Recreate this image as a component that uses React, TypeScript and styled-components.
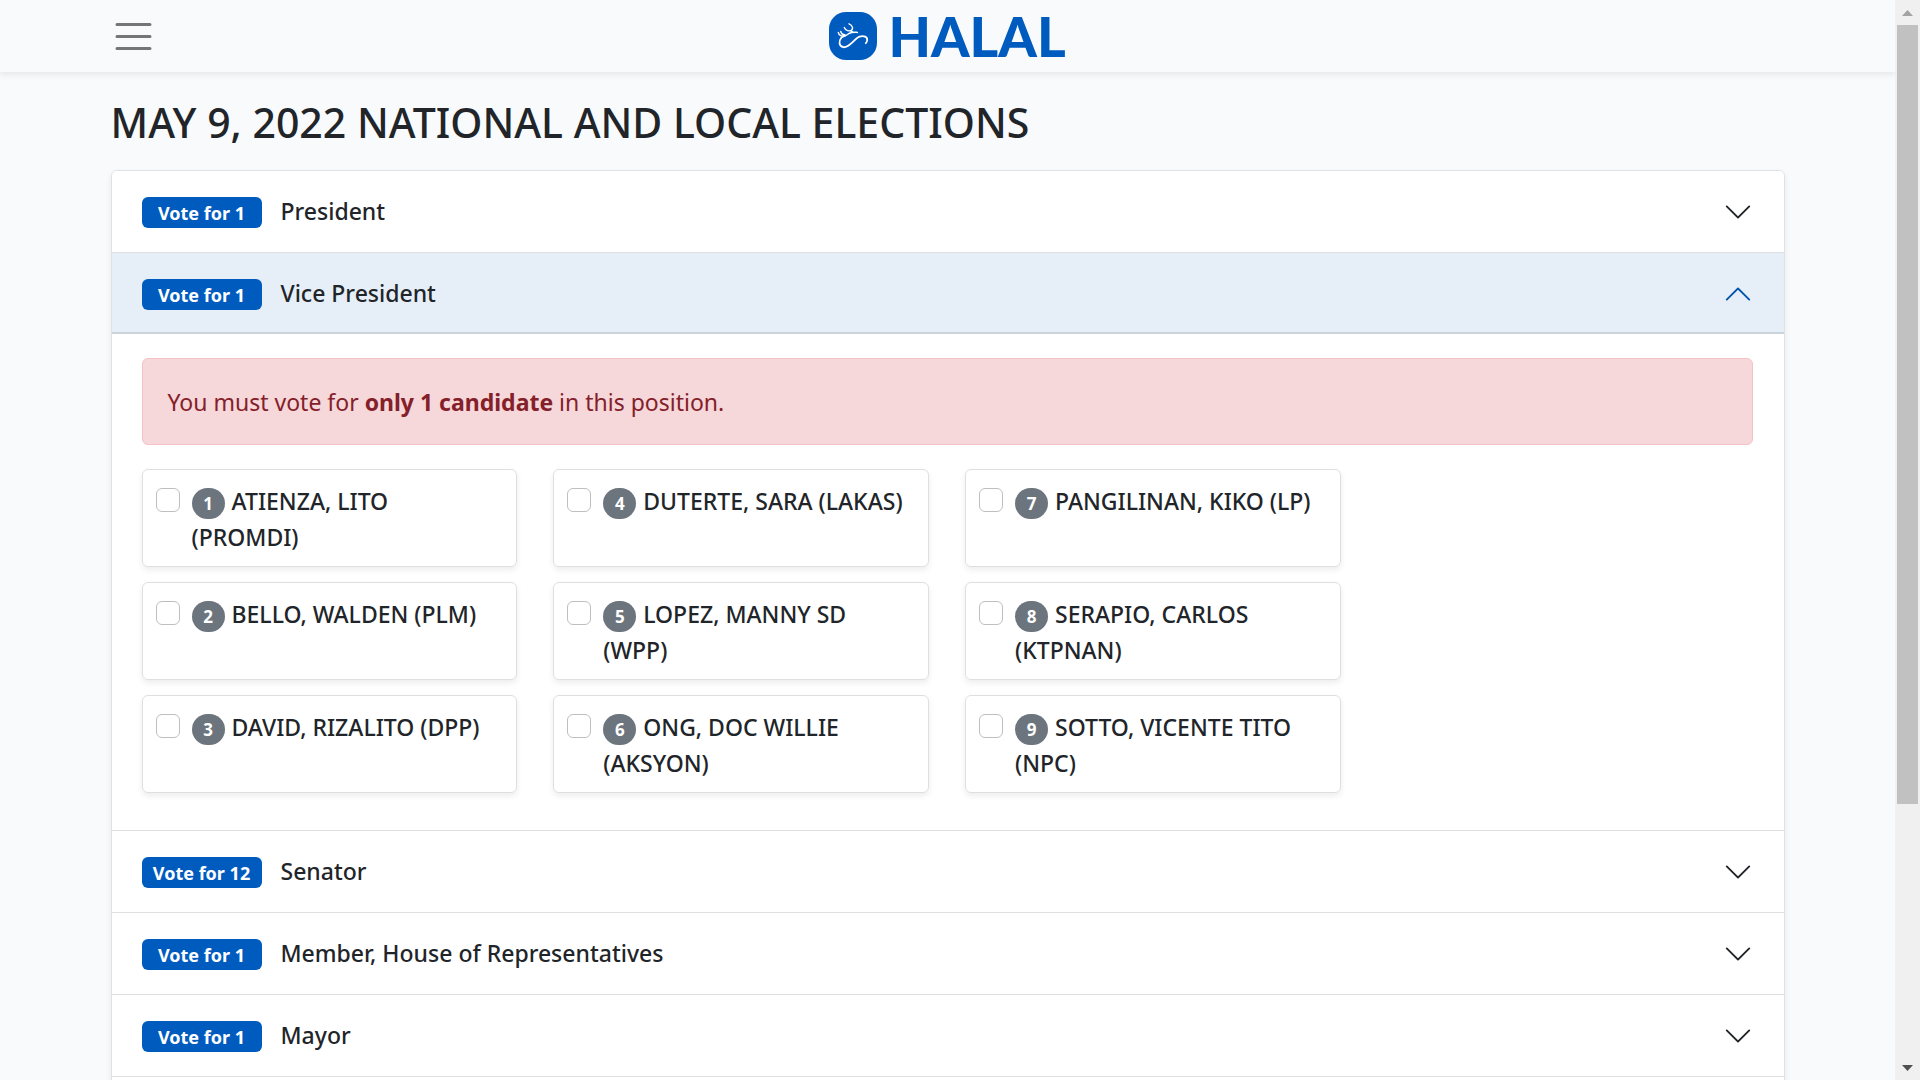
import React, { useState } from "react";
import styled, { createGlobalStyle } from "styled-components";

const blue = "#005bbf";
const ink = "#212529";

const GlobalStyle = createGlobalStyle`
  *, *::before, *::after { box-sizing: border-box; }
  body {
    margin: 0;
    background: #f8fafc;
    color: ${ink};
    font-family: "Segoe UI", "Noto Sans", "Open Sans", sans-serif;
    font-size: 23px;
    line-height: 36px;
  }
`;

const Shell = styled.div`
  display: flex;
  height: 100vh;
  overflow: hidden;
`;

const Page = styled.div`
  flex: 1;
  min-width: 0;
  overflow: hidden;
`;

const Container = styled.div`
  width: 100%;
  max-width: 1710px;
  margin: 0 auto;
  padding: 0 18px;
`;

const Navbar = styled.header`
  box-shadow: 0 3px 6px rgba(0, 0, 0, 0.075);
`;

const NavRow = styled(Container)`
  display: grid;
  grid-template-columns: 1fr auto 1fr;
  align-items: center;
  height: 72px;
`;

const MenuButton = styled.button`
  display: flex;
  justify-self: start;
  padding: 0;
  border: 0;
  background: none;
  cursor: pointer;
`;

const Brand = styled.a`
  display: flex;
  align-items: center;
  gap: 11px;
  color: ${blue};
  text-decoration: none;
`;

const Wordmark = styled.span`
  font-family: Lato, sans-serif;
  font-size: 55px;
  font-weight: 900;
  line-height: 60px;
`;

const Title = styled.h1`
  margin: 0;
  padding: 25px 0 23px;
  font-size: 41px;
  font-weight: 500;
  line-height: 50px;
`;

const Accordion = styled.main`
  min-height: 100vh;
  border: 1px solid #dfe1e3;
  border-radius: 6px;
  background: #fff;
  box-shadow: 0 3px 6px rgba(0, 0, 0, 0.075);
`;

const Item = styled.section`
  border-bottom: 1px solid #dfdfdf;
`;

const ItemHeading = styled.h2`
  margin: 0;
  font: inherit;
`;

const ItemButton = styled.button<{ $open: boolean }>`
  display: flex;
  align-items: center;
  gap: 19px;
  width: 100%;
  height: 81px;
  padding: 0 31px 0 30px;
  border: 0;
  border-radius: ${(p) => (p.$open ? "0" : "5px")};
  background: ${(p) => (p.$open ? "#e6eff8" : "#fff")};
  box-shadow: ${(p) => (p.$open ? "inset 0 -2px 0 #cbd4dd" : "none")};
  color: ${ink};
  font: inherit;
  font-weight: 500;
  text-align: left;
  cursor: pointer;
`;

const VoteBadge = styled.span`
  width: 120px;
  margin-top: 2px;
  padding-top: 1px;
  border-radius: 6px;
  background: ${blue};
  color: #fff;
  font-size: 18px;
  font-weight: 700;
  line-height: 30px;
  text-align: center;
`;

const ItemTitle = styled.span`
  flex: 1;
  padding-bottom: 2px;
`;

const ItemBody = styled.div`
  padding: 24px 31px 37px 30px;
`;

const Alert = styled.p`
  margin: 0 0 24px;
  padding: 25px 25px 24px;
  border: 1px solid #f5c2c7;
  border-radius: 6px;
  background: #f6d7da;
  color: #842029;
`;

const Candidates = styled.div`
  display: grid;
  grid-template-columns: repeat(4, minmax(0, 1fr));
  grid-template-rows: repeat(3, auto);
  grid-auto-flow: column;
  gap: 15px 36px;
`;

const Candidate = styled.label`
  display: flex;
  gap: 12px;
  min-height: 98px;
  padding: 13px 20px 10px 13px;
  border: 1px solid #dfdfdf;
  border-radius: 6px;
  box-shadow: 0 3px 6px rgba(0, 0, 0, 0.075);
  font-weight: 500;
  cursor: pointer;
`;

const Checkbox = styled.input`
  appearance: none;
  flex: none;
  width: 24px;
  height: 24px;
  margin: 5px 0 0;
  border: 1px solid #bfbfbf;
  border-radius: 6px;
  background: #fff;
  &:checked { background: ${blue}; border-color: ${blue}; }
`;

const NumberBadge = styled.span`
  display: inline-block;
  width: 33px;
  margin-right: 7px;
  border-radius: 16px;
  background: #6c757d;
  color: #fff;
  font-size: 17px;
  font-weight: 700;
  line-height: 31px;
  text-align: center;
  vertical-align: middle;
`;

const Rail = styled.div`
  display: flex;
  flex-direction: column;
  align-items: center;
  width: 25px;
  background: #f0f0f0;
`;

const RailButton = styled.button`
  display: flex;
  align-items: center;
  justify-content: center;
  width: 25px;
  height: 25px;
  padding: 0;
  border: 0;
  background: none;
`;

const RailTrack = styled.div`
  display: grid;
  flex: 1;
  grid-template-rows: 31fr 10fr;
  width: 21px;
`;

const RailThumb = styled.div`
  background: #c1c1c1;
`;

const Chevron = ({ open }: { open: boolean }) => (
  <svg width="30" height="30" viewBox="0 0 16 16" fill={open ? "#0052ac" : ink} aria-hidden="true">
    {open ? (
      <path fillRule="evenodd" d="M14.354 11.354a.5.5 0 0 1-.708 0L8 5.707l-5.646 5.647a.5.5 0 0 1-.708-.708l6-6a.5.5 0 0 1 .708 0l6 6a.5.5 0 0 1 0 .708z" />
    ) : (
      <path fillRule="evenodd" d="M1.646 4.646a.5.5 0 0 1 .708 0L8 10.293l5.646-5.647a.5.5 0 0 1 .708.708l-6 6a.5.5 0 0 1-.708 0l-6-6a.5.5 0 0 1 0-.708z" />
    )}
  </svg>
);

const LogoMark = () => (
  <svg width="48" height="48" viewBox="0 0 48 48" fill="none" stroke="#fff" strokeLinecap="round" strokeLinejoin="round" aria-hidden="true">
    <rect width="48" height="48" rx="17" fill={blue} stroke="none" />
    <path strokeWidth="1.8" d="M12.500 25.500C9.500 29 9.800 34.500 14.300 35.200C20.500 36 25 27 30.500 24.700C35 23 38.500 25 38.200 28C38.100 29.500 37.500 30.500 36.800 31.200" />
    <path strokeWidth="1.500" d="M12.500 25.500C15.500 24.500 17.500 23.500 20 21.500C22.500 20 25 20.300 28.500 20.400" />
    <path strokeWidth="1.400" d="M9.300 20.500C10 23.500 12.500 24.800 16.500 23.600M11.800 19.500C12.300 21.700 13.800 22.800 16 22.800M15.300 15.500C16.500 18 18.500 19.300 21.500 18.800C24.800 17.500 24 13.500 20 11.800M21.500 18.800L24 20.200" />
  </svg>
);

const positions = [
  { title: "President", votes: 1 },
  { title: "Vice President", votes: 1 },
  { title: "Senator", votes: 12 },
  { title: "Member, House of Representatives", votes: 1 },
  { title: "Mayor", votes: 1 },
];

const candidates = [
  "ATIENZA, LITO (PROMDI)",
  "BELLO, WALDEN (PLM)",
  "DAVID, RIZALITO (DPP)",
  "DUTERTE, SARA (LAKAS)",
  "LOPEZ, MANNY SD (WPP)",
  "ONG, DOC WILLIE (AKSYON)",
  "PANGILINAN, KIKO (LP)",
  "SERAPIO, CARLOS (KTPNAN)",
  "SOTTO, VICENTE TITO (NPC)",
];

export default function App() {
  const [current, setCurrent] = useState("Vice President");
  return (
    <>
      <GlobalStyle />
      <Shell>
        <Page>
          <Navbar>
            <NavRow as="nav">
              <MenuButton type="button" aria-label="Toggle navigation">
                <svg width="45" height="45" viewBox="0 0 30 30" stroke="#747577" strokeWidth="2" strokeLinecap="round" aria-hidden="true">
                  <path d="M4 7h22M4 15h22M4 23h22" />
                </svg>
              </MenuButton>
              <Brand href="#">
                <LogoMark />
                <Wordmark>HALAL</Wordmark>
              </Brand>
            </NavRow>
          </Navbar>
          <Container>
            <Title>MAY 9, 2022 NATIONAL AND LOCAL ELECTIONS</Title>
            <Accordion>
              {positions.map(({ title, votes }) => {
                const open = title === current;
                return (
                  <Item key={title}>
                    <ItemHeading>
                      <ItemButton type="button" $open={open} aria-expanded={open} onClick={() => setCurrent(open ? "" : title)}>
                        <VoteBadge>Vote for {votes}</VoteBadge>
                        <ItemTitle>{title}</ItemTitle>
                        <Chevron open={open} />
                      </ItemButton>
                    </ItemHeading>
                    {open && (
                      <ItemBody>
                        <Alert role="alert">
                          You must vote for <strong>only 1 candidate</strong> in this position.
                        </Alert>
                        <Candidates>
                          {candidates.map((name, i) => (
                            <Candidate key={name}>
                              <Checkbox type="checkbox" name="candidate" />
                              <span>
                                <NumberBadge>{i + 1}</NumberBadge>
                                {name}
                              </span>
                            </Candidate>
                          ))}
                        </Candidates>
                      </ItemBody>
                    )}
                  </Item>
                );
              })}
            </Accordion>
          </Container>
        </Page>
        <Rail>
          <RailButton type="button" aria-label="Scroll up">
            <svg width="11" height="6" viewBox="0 0 11 6" fill="#a3a3a3"><path d="M5.500 0L11 6H0z" /></svg>
          </RailButton>
          <RailTrack><RailThumb /></RailTrack>
          <RailButton type="button" aria-label="Scroll down">
            <svg width="11" height="6" viewBox="0 0 11 6" fill="#505050"><path d="M0 0H11L5.500 6z" /></svg>
          </RailButton>
        </Rail>
      </Shell>
    </>
  );
}
